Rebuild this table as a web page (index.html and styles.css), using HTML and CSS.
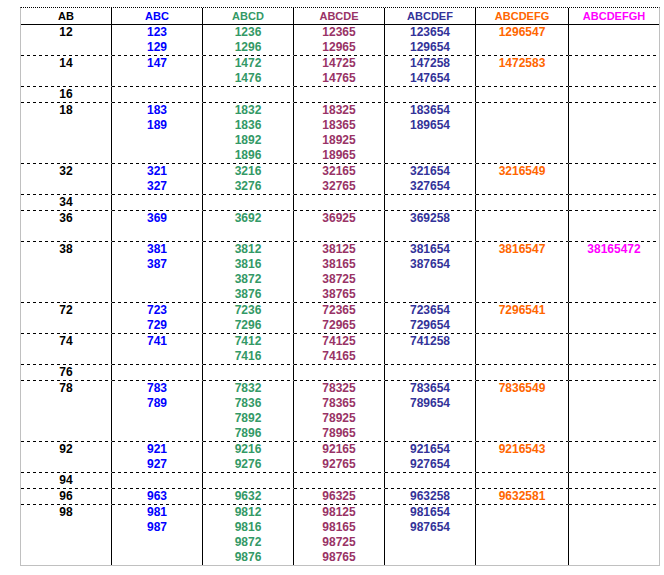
FILE: index.html
```html
<!DOCTYPE html>
<html>
<head>
<meta charset="utf-8">
<link rel="stylesheet" href="styles.css">
</head>
<body>
<table class="grid">
  <colgroup>
    <col class="w90"><col class="w90"><col class="w90"><col class="w90"><col class="w90"><col class="w92"><col class="w89">
  </colgroup>
  <thead>
    <tr>
      <th class="c1">AB</th><th class="c2">ABC</th><th class="c3">ABCD</th><th class="c4">ABCDE</th><th class="c5">ABCDEF</th><th class="c6">ABCDEFG</th><th class="c7">ABCDEFGH</th>
    </tr>
  </thead>
  <tbody>
    <tr><td class="c1">12</td><td class="c2">123<br>129</td><td class="c3">1236<br>1296</td><td class="c4">12365<br>12965</td><td class="c5">123654<br>129654</td><td class="c6">1296547</td><td class="c7"></td></tr>
    <tr><td class="c1">14</td><td class="c2">147</td><td class="c3">1472<br>1476</td><td class="c4">14725<br>14765</td><td class="c5">147258<br>147654</td><td class="c6">1472583</td><td class="c7"></td></tr>
    <tr><td class="c1">16</td><td class="c2"></td><td class="c3"></td><td class="c4"></td><td class="c5"></td><td class="c6"></td><td class="c7"></td></tr>
    <tr><td class="c1">18</td><td class="c2">183<br>189</td><td class="c3">1832<br>1836<br>1892<br>1896</td><td class="c4">18325<br>18365<br>18925<br>18965</td><td class="c5">183654<br>189654</td><td class="c6"></td><td class="c7"></td></tr>
    <tr><td class="c1">32</td><td class="c2">321<br>327</td><td class="c3">3216<br>3276</td><td class="c4">32165<br>32765</td><td class="c5">321654<br>327654</td><td class="c6">3216549</td><td class="c7"></td></tr>
    <tr><td class="c1">34</td><td class="c2"></td><td class="c3"></td><td class="c4"></td><td class="c5"></td><td class="c6"></td><td class="c7"></td></tr>
    <tr class="two"><td class="c1">36</td><td class="c2">369</td><td class="c3">3692</td><td class="c4">36925</td><td class="c5">369258</td><td class="c6"></td><td class="c7"></td></tr>
    <tr><td class="c1">38</td><td class="c2">381<br>387</td><td class="c3">3812<br>3816<br>3872<br>3876</td><td class="c4">38125<br>38165<br>38725<br>38765</td><td class="c5">381654<br>387654</td><td class="c6">3816547</td><td class="c7">38165472</td></tr>
    <tr><td class="c1">72</td><td class="c2">723<br>729</td><td class="c3">7236<br>7296</td><td class="c4">72365<br>72965</td><td class="c5">723654<br>729654</td><td class="c6">7296541</td><td class="c7"></td></tr>
    <tr><td class="c1">74</td><td class="c2">741</td><td class="c3">7412<br>7416</td><td class="c4">74125<br>74165</td><td class="c5">741258</td><td class="c6"></td><td class="c7"></td></tr>
    <tr><td class="c1">76</td><td class="c2"></td><td class="c3"></td><td class="c4"></td><td class="c5"></td><td class="c6"></td><td class="c7"></td></tr>
    <tr><td class="c1">78</td><td class="c2">783<br>789</td><td class="c3">7832<br>7836<br>7892<br>7896</td><td class="c4">78325<br>78365<br>78925<br>78965</td><td class="c5">783654<br>789654</td><td class="c6">7836549</td><td class="c7"></td></tr>
    <tr><td class="c1">92</td><td class="c2">921<br>927</td><td class="c3">9216<br>9276</td><td class="c4">92165<br>92765</td><td class="c5">921654<br>927654</td><td class="c6">9216543</td><td class="c7"></td></tr>
    <tr><td class="c1">94</td><td class="c2"></td><td class="c3"></td><td class="c4"></td><td class="c5"></td><td class="c6"></td><td class="c7"></td></tr>
    <tr><td class="c1">96</td><td class="c2">963</td><td class="c3">9632</td><td class="c4">96325</td><td class="c5">963258</td><td class="c6">9632581</td><td class="c7"></td></tr>
    <tr class="last"><td class="c1">98</td><td class="c2">981<br>987</td><td class="c3">9812<br>9816<br>9872<br>9876</td><td class="c4">98125<br>98165<br>98725<br>98765</td><td class="c5">981654<br>987654</td><td class="c6"></td><td class="c7"></td></tr>
  </tbody>
</table>
</body>
</html>
```
FILE: styles.css
```css
html, body {
  margin: 0;
  padding: 0;
  background: #ffffff;
}
body {
  padding: 7px 0 0 20px;
  font-family: "Liberation Sans", Arial, sans-serif;
  font-weight: bold;
}
.grid {
  border-collapse: separate;
  border-spacing: 0;
  table-layout: fixed;
  width: 640px;
  border-top: 1px dotted #000000;
  border-left: 1px solid #c0c0c0;
  border-right: 1px solid #c0c0c0;
  border-bottom: 1px solid #c0c0c0;
}
.w90 { width: 91px; }
.w92 { width: 93px; }
.w89 { width: 90px; }
.grid th,
.grid td {
  padding: 0;
  text-align: center;
  vertical-align: top;
  border-right: 1px solid #000000;
}
.grid th.c7,
.grid td.c7 {
  border-right: none;
}
.grid th {
  font-size: 11px;
  line-height: 16px;
  height: 16px;
  border-bottom: 1px solid #000000;
}
.grid td {
  font-size: 12px;
  line-height: 15px;
  height: 15px;
  border-bottom: 1px solid transparent;
  background-image: linear-gradient(to right, #000000 3px, transparent 3px);
  background-size: 6px 1px;
  background-repeat: repeat-x;
  background-position: left bottom;
  background-origin: border-box;
  background-clip: border-box;
}
.grid tr.two td {
  height: 30px;
}
.grid tr.last td {
  border-bottom: none;
  background-image: none;
}
.c1 { color: #000000; }
.c2 { color: #0000ff; }
.c3 { color: #339966; }
.c4 { color: #993366; }
.c5 { color: #333399; }
.c6 { color: #ff6600; }
.c7 { color: #ff00ff; }
```
